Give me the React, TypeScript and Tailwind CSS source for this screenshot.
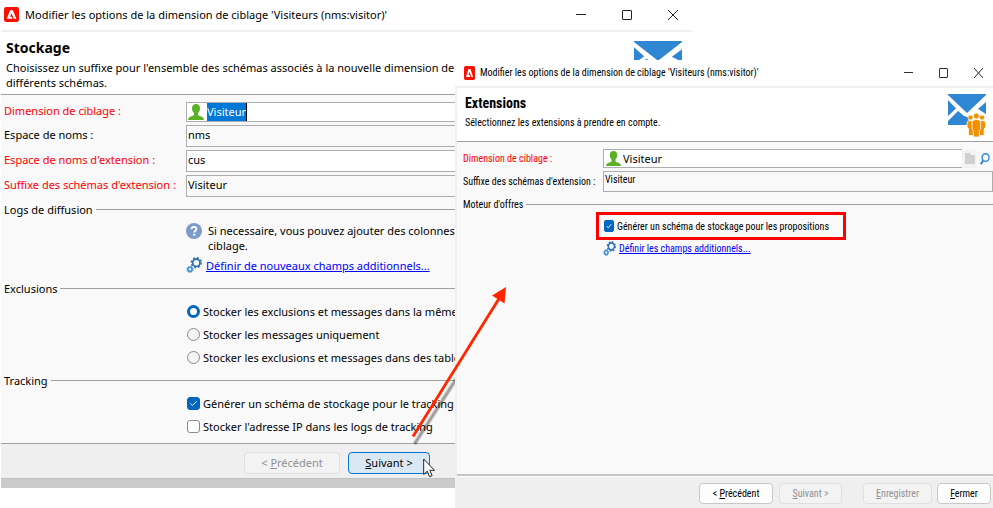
import React, { useState } from "react";

function AdobeLogo({ className }: { className: string }) {
  return (
    <svg viewBox="0 0 14 14" preserveAspectRatio="none" className={className}>
      <rect width="14" height="14" rx="2" fill="#fa0f00" />
      <path d="M5.700 3h2.600l3.200 8H9.200L7 5.800 5.700 9h1.500l.8 2H2.500z" fill="#fff" />
    </svg>
  );
}

function PersonIcon({ className }: { className: string }) {
  return (
    <svg viewBox="0 0 16 16" preserveAspectRatio="none" className={className}>
      <path
        d="M8 0c2.500 0 4 1.700 4 4.300 0 2-.7 3.700-1.900 4.700v1.600c0 .6.5 1 1.400 1.300 2.500.8 4.500 1.400 4.500 4.100H0c0-2.700 2-3.300 4.500-4.100.9-.3 1.400-.7 1.400-1.300V9C4.700 8 4 6.300 4 4.300 4 1.700 5.500 0 8 0z"
        fill="#5cb026"
      />
    </svg>
  );
}

function GearsIcon({ className }: { className: string }) {
  return (
    <svg viewBox="0 0 16 16" preserveAspectRatio="none" className={className} fill="none">
      <circle cx="10.300" cy="5.700" r="3.700" stroke="#2f6fab" strokeWidth="1.800" />
      <circle
        cx="10.300"
        cy="5.700"
        r="5"
        stroke="#2f6fab"
        strokeWidth="1.500"
        strokeDasharray="1.900 2.027"
      />
      <circle cx="4" cy="12.300" r="2.100" stroke="#3b8fd6" strokeWidth="1.600" />
      <circle
        cx="4"
        cy="12.300"
        r="3.200"
        stroke="#3b8fd6"
        strokeWidth="1"
        strokeDasharray="1.300 1.213"
      />
    </svg>
  );
}

function EnvelopeIcon({ className, people }: { className: string; people?: boolean }) {
  return (
    <svg viewBox="0 0 38 44" preserveAspectRatio="none" className={className}>
      <g fill="#2f86d2">
        <path d="M0 0h38v1L19 19 0 1z" />
        <path d="M0 6l8 8.500L0 22z" />
        <path d="M38 8l-8 7 8 5z" />
        <path d="M10 17l6 5 3 1 2-1v9H0v-4z" />
      </g>
      {people && (
        <g fill="#f29100" stroke="#fff" strokeWidth="0.800">
          <circle cx="22.500" cy="23.500" r="2.600" />
          <circle cx="34" cy="23.500" r="2.600" />
          <path d="M19 29q0-2.500 3.500-2.500T26 29v12.500h-5.500V35L19 33z" />
          <path d="M37.700 29q0-2.500-3.500-2.500T30.500 29v12.500h5.700V35l1.500-2z" />
          <circle cx="28.300" cy="22" r="3" />
          <path d="M24 29q0-3.500 4.300-3.500t4.300 3.500v6l-1.300 1.500V43h-6v-6.500L24 35z" />
        </g>
      )}
    </svg>
  );
}

function HelpIcon() {
  return (
    <svg viewBox="0 0 16 16" className="h-4 w-4 shrink-0">
      <circle cx="8" cy="8" r="8" fill="#7c9cc9" />
      <path
        d="M5.500 6.200C5.600 4.600 6.600 3.800 8 3.800s2.500.8 2.500 2.100c0 1.800-2.300 1.900-2.300 3.700"
        fill="none"
        stroke="#fff"
        strokeWidth="1.800"
      />
      <rect x="7.200" y="10.700" width="2" height="2" fill="#fff" />
    </svg>
  );
}

function WindowControls({ className, icon }: { className: string; icon: string }) {
  return (
    <div className={className}>
      <button aria-label="Réduire">
        <svg viewBox="0 0 10 10" preserveAspectRatio="none" className={icon} stroke="#222" fill="none">
          <path d="M0 4.500h10" />
        </svg>
      </button>
      <button aria-label="Agrandir">
        <svg viewBox="0 0 10 10" preserveAspectRatio="none" className={icon} stroke="#222" fill="none">
          <rect x="0.500" y="0.500" width="9" height="9" rx="0.500" />
        </svg>
      </button>
      <button aria-label="Fermer la fenêtre">
        <svg viewBox="0 0 10 10" preserveAspectRatio="none" className={icon} stroke="#222" fill="none">
          <path d="M0 0l10 10M10 0L0 10" />
        </svg>
      </button>
    </div>
  );
}

function Legend({ children }: { children: React.ReactNode }) {
  return (
    <div className="flex h-4 items-center gap-[3px] pl-[3px]">
      <h2>{children}</h2>
      <div className="h-px flex-1 bg-[#a0a0a0]" />
    </div>
  );
}

function Tick() {
  return (
    <svg
      viewBox="0 0 13 13"
      preserveAspectRatio="none"
      className="pointer-events-none absolute inset-0 h-full w-full"
    >
      <path d="M3.500 6.500l2 2 4-4" fill="none" stroke="#fff" strokeWidth="1" />
    </svg>
  );
}

function Field({
  id,
  label,
  value,
  required,
  editable,
}: {
  id: string;
  label: string;
  value: string;
  required?: boolean;
  editable?: boolean;
}) {
  return (
    <div className="flex h-[22px] items-center">
      <label
        htmlFor={id}
        className={required ? "w-[185px] pb-[3px] pl-[3px] text-[#ff0000]" : "w-[185px] pb-[3px] pl-[3px]"}
      >
        {label}
      </label>
      <input
        id={id}
        defaultValue={value}
        readOnly={!editable}
        className={
          editable
            ? "h-full flex-1 border border-[#abadb3] bg-white px-px pb-[3px] outline-none"
            : "h-full flex-1 border border-[#abadb3] bg-[#f9f9f9] px-px pb-[3px] outline-none"
        }
      />
    </div>
  );
}

const exclusions = [
  "Stocker les exclusions et messages dans la même table",
  "Stocker les messages uniquement",
  "Stocker les exclusions et messages dans des tables distinctes",
];

function StorageWindow() {
  const [exclusion, setExclusion] = useState(0);
  const [tracking, setTracking] = useState([true, false]);

  return (
    <section className="absolute top-0 left-px w-[691px] bg-white font-['Noto_Sans',sans-serif] text-[11px] leading-[15px] whitespace-nowrap">
      {/* Title bar */}
      <header className="flex h-8 items-center border-b-2 border-[#f0f0f0] pb-px pl-[3px]">
        <AdobeLogo className="mr-[6px] h-[15px] w-[15px]" />
        <h1 className="flex-1">Modifier les options de la dimension de ciblage 'Visiteurs (nms:visitor)'</h1>
        <WindowControls className="flex gap-9 pr-[14px]" icon="h-[10px] w-[10px]" />
      </header>

      <div className="flex h-[63px] justify-between border-b border-[#a0a0a0] pt-2 pr-[10px] pl-[5px]">
        <div>
          <h2 className="mb-1 text-sm leading-4 font-bold">Stockage</h2>
          <p>
            Choisissez un suffixe pour l'ensemble des schémas associés à la nouvelle dimension de ciblage
            <br />
            différents schémas.
          </p>
        </div>
        <EnvelopeIcon className="mt-px h-[46px] w-12" />
      </div>

      <div className="h-[349px] border-b border-[#a0a0a0] bg-[#f9f9f9] pt-[7px]">
        <div className="flex flex-col gap-[3px]">
          <div className="flex h-5 items-center">
            <label htmlFor="dimension" className="w-[185px] pb-[3px] pl-[3px] text-[#ff0000]">
              Dimension de ciblage :
            </label>
            <div className="flex h-full flex-1 items-center border border-[#abadb3] bg-white pl-px">
              <PersonIcon className="mr-[3px] h-4 w-4" />
              <input
                id="dimension"
                defaultValue="Visiteur"
                className="h-[18px] w-10 border-r border-black bg-[#0078d7] pb-[2px] text-white outline-none"
              />
            </div>
          </div>
          <Field id="namespace" label="Espace de noms :" value="nms" />
          <Field id="extension" label="Espace de noms d'extension :" value="cus" required editable />
          <Field id="suffix" label="Suffixe des schémas d'extension :" value="Visiteur" required />
        </div>

        <div className="mt-1">
          <Legend>Logs de diffusion</Legend>
          <div className="mt-[6px] flex gap-[6px] pl-[185px]">
            <HelpIcon />
            <p>
              Si necessaire, vous pouvez ajouter des colonnes
              <br />
              ciblage.
            </p>
          </div>
          <div className="mt-1 flex h-4 items-center gap-1 pl-[185px]">
            <GearsIcon className="h-4 w-4" />
            <a href="#champs" className="text-[#0000ff] underline">
              Définir de nouveaux champs additionnels...
            </a>
          </div>
        </div>

        <div className="mt-[7px]">
          <Legend>Exclusions</Legend>
          <div className="mt-1 pl-[186px]">
            {exclusions.map((text, i) => (
              <label key={text} className="flex h-[23px] items-center gap-[3px]">
                <input
                  type="radio"
                  name="exclusions"
                  checked={exclusion === i}
                  onChange={() => setExclusion(i)}
                  className="h-[13px] w-[13px] appearance-none rounded-full border border-[#8a8a8a] bg-[#f3f3f3] checked:border-3 checked:border-[#0067c0] checked:bg-white"
                />
                {text}
              </label>
            ))}
          </div>
        </div>

        <div className="mt-[3px]">
          <Legend>Tracking</Legend>
          <div className="mt-1 pl-[186px]">
            {[
              "Générer un schéma de stockage pour le tracking",
              "Stocker l'adresse IP dans les logs de tracking",
            ].map((text, i) => (
              <label key={text} className="flex h-[23px] items-center gap-[3px]">
                <span className="relative h-[13px] w-[13px]">
                  <input
                    type="checkbox"
                    checked={tracking[i]}
                    onChange={() => setTracking(tracking.map((t, j) => (j === i ? !t : t)))}
                    className="block h-full w-full appearance-none rounded-[3px] border border-[#8a8a8a] bg-white checked:border-[#0067c0] checked:bg-[#0067c0]"
                  />
                  {tracking[i] && <Tick />}
                </span>
                {text}
              </label>
            ))}
          </div>
        </div>
      </div>

      <footer className="flex gap-2 border-b border-[#c0c0c0] bg-[#efefef] pt-2 pb-1 pl-[243px]">
        <button
          disabled
          className="h-[22px] w-24 rounded border border-[#e0e0e0] bg-[#f3f3f3] pb-px text-[#8f8f8f]"
        >
          &lt; <u>P</u>récédent
        </button>
        <button className="h-[22px] w-[82px] rounded border border-[#0078d4] bg-[#dae8f3] pb-px">
          <u>S</u>uivant &gt;
        </button>
      </footer>
      <div className="h-[9px] bg-[#cbcbcb]" />
    </section>
  );
}

function ExtensionsWindow() {
  const [generate, setGenerate] = useState(true);

  return (
    <section className="absolute top-[60px] right-0 bottom-0 left-[455px] flex flex-col bg-white font-['Roboto_Condensed',Roboto,sans-serif] text-[10px] leading-[15px] whitespace-nowrap">
      {/* Title bar */}
      <header className="flex h-7 items-center border-b-2 border-[#f0f0f0] pb-px pl-[9px]">
        <AdobeLogo className="mr-[5px] h-[14px] w-[11px]" />
        <h1 className="flex-1">Modifier les options de la dimension de ciblage 'Visiteurs (nms:visitor)'</h1>
        <WindowControls className="flex gap-[26px] pr-[10px]" icon="h-[10px] w-[9px]" />
      </header>

      <div className="flex flex-1 flex-col border-l-2 border-[#f0f0f0]">
        <div className="flex h-[54px] justify-between border-b border-[#a0a0a0] pt-[6px] pr-[7px] pl-2">
          <div className="pt-px">
            <h2 className="mb-1 text-sm leading-4 font-bold">Extensions</h2>
            <p>Sélectionnez les extensions à prendre en compte.</p>
          </div>
          <EnvelopeIcon className="h-11 w-[38px]" people />
        </div>

        <div className="flex-1 border-b-2 border-[#c4c4c4] bg-[#f9f9f9] pt-[7px]">
          <div className="flex h-[19px] items-center">
            <label htmlFor="dimension2" className="w-[146px] shrink-0 pb-px pl-[6px] text-[#ff0000]">
              Dimension de ciblage :
            </label>
            <div className="flex h-full flex-1 items-center border border-r-0 border-[#abadb3] bg-white pl-[2px]">
              <PersonIcon className="mr-[2px] h-[15px] w-[15px] shrink-0" />
              <input
                id="dimension2"
                defaultValue="Visiteur"
                className="w-full bg-transparent font-['Noto_Sans',sans-serif] text-[11px] outline-none"
              />
            </div>
            <button aria-label="Ouvrir" className="flex h-[18px] w-[15px] items-center justify-center bg-[#f3f3f3]">
              <svg viewBox="0 0 10 11" className="h-[11px] w-[10px]">
                <path d="M0 0h5.500v2H10v9H0z" fill="#d0d0d0" />
              </svg>
            </button>
            <button aria-label="Rechercher" className="flex w-4 items-center justify-center">
              <svg viewBox="0 0 10 12" className="h-3 w-[10px]" fill="none" stroke="#2f86d2">
                <ellipse cx="5.600" cy="4.500" rx="3.500" ry="3.800" strokeWidth="1.400" />
                <path d="M3.300 7.500L.8 11.200" strokeWidth="2" />
              </svg>
            </button>
          </div>
          <div className="mt-[3px] flex h-[21px] items-center">
            <label htmlFor="suffix2" className="w-[146px] shrink-0 pb-px pl-[6px]">
              Suffixe des schémas d'extension :
            </label>
            <input
              id="suffix2"
              defaultValue="Visiteur"
              readOnly
              className="h-full flex-1 border border-[#abadb3] bg-[#f9f9f9] px-px pb-1 outline-none"
            />
          </div>

          <div className="mt-1 pl-[3px]">
            <Legend>Moteur d'offres</Legend>
          </div>
          <label className="mr-auto ml-[139px] flex h-7 w-[250px] items-center gap-[3px] border-3 border-[#ff0000] pl-[5px]">
            <span className="relative h-3 w-[10px] shrink-0">
              <input
                type="checkbox"
                checked={generate}
                onChange={() => setGenerate(!generate)}
                className="block h-full w-full appearance-none rounded-[2px] border border-[#8a8a8a] bg-white checked:border-[#0067c0] checked:bg-[#0067c0]"
              />
              {generate && <Tick />}
            </span>
            Générer un schéma de stockage pour les propositions
          </label>
          <div className="flex h-4 items-center gap-[3px] pl-[146px]">
            <GearsIcon className="h-[15px] w-[13px]" />
            <a href="#additionnels" className="text-[#0000ff] underline">
              Définir les champs additionnels...
            </a>
          </div>
        </div>

        <footer className="flex justify-end border-t border-white bg-[#efefef] pt-[6px] pr-[2px] pb-[4px]">
          <button className="mr-[6px] h-[21px] w-[74px] rounded border border-[#c8c8c8] bg-[#fdfdfd]">
            &lt; <u>P</u>récédent
          </button>
          <button
            disabled
            className="mr-[21px] h-[21px] w-[63px] rounded border border-[#e0e0e0] bg-[#f3f3f3] text-[#8f8f8f]"
          >
            <u>S</u>uivant &gt;
          </button>
          <button
            disabled
            className="mr-[5px] h-[21px] w-[69px] rounded border border-[#e0e0e0] bg-[#f3f3f3] text-[#8f8f8f]"
          >
            <u>E</u>nregistrer
          </button>
          <button className="h-[21px] w-[54px] rounded border border-[#c8c8c8] bg-[#fdfdfd]">
            <u>F</u>ermer
          </button>
        </footer>
      </div>
    </section>
  );
}

function App() {
  return (
    <main className="relative h-screen overflow-hidden bg-white text-black">
      <StorageWindow />
      {/* Shadow of the arrow, hidden behind the second window */}
      <svg className="pointer-events-none absolute top-[280px] left-[400px] h-[180px] w-[120px]" viewBox="0 0 120 180">
        <path d="M14.500 164L60 93" stroke="#000" strokeOpacity="0.150" strokeWidth="4.500" />
        <path d="M14.500 164L60 93" stroke="#000" strokeOpacity="0.250" strokeWidth="2.500" />
      </svg>
      <ExtensionsWindow />
      <svg className="pointer-events-none absolute top-[280px] left-[400px] h-[180px] w-[120px]" viewBox="0 0 120 180">
        <path d="M13 156.500L100 17" stroke="#ff2600" strokeWidth="2.800" />
        <path d="M106 7L104.500 23.500L92 15.500z" fill="#ff2600" />
      </svg>
      {/* Mouse pointer */}
      <svg className="pointer-events-none absolute top-[458px] left-[423px] h-5 w-3" viewBox="0 0 12 20">
        <path d="M.7 1v15.500l3.500-3.300 2.300 5.500 2.600-1.100-2.300-5.300h4.700z" fill="#fff" stroke="#222" />
      </svg>
    </main>
  );
}

export default App;
